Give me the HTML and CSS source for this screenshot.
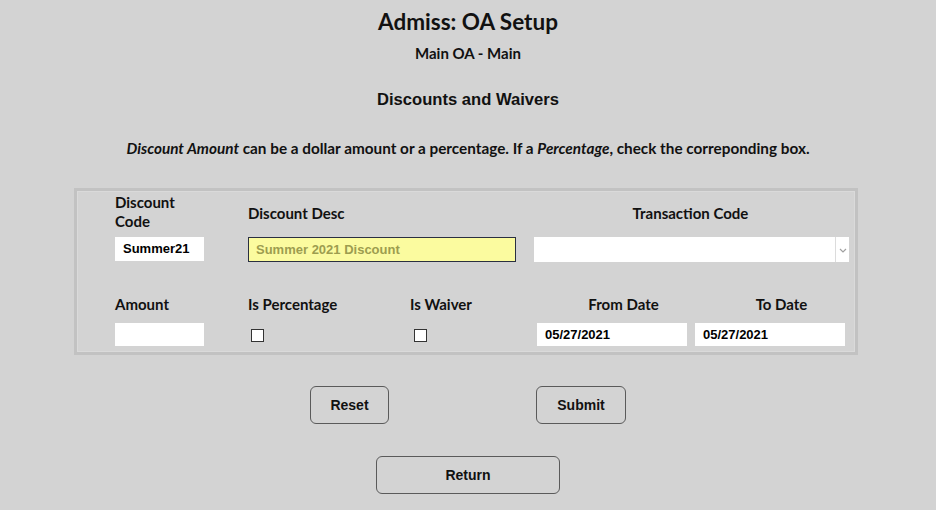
FILE: index.html
```html
<!DOCTYPE html>
<html>
<head>
<meta charset="utf-8">
<link rel="stylesheet" href="styles.css">
</head>
<body>
<h1 class="title">Admiss: OA Setup</h1>
<div class="subtitle">Main OA - Main</div>
<h2 class="section">Discounts and Waivers</h2>
<p class="note"><i>Discount Amount</i> can be a dollar amount or a percentage. If a <i>Percentage</i>, check the correponding box.</p>

<div class="panel">
  <div class="grid">
    <div class="lbl l-code">Discount<br>Code</div>
    <div class="lbl l-desc">Discount Desc</div>
    <div class="lbl l-trans">Transaction Code</div>

    <div class="field f-code">Summer21</div>
    <div class="field f-desc">Summer 2021 Discount</div>
    <div class="field f-trans"><span class="sel-body"></span><span class="sel-arrow"><svg width="8" height="5" viewBox="0 0 8 5"><path d="M1 1 L4 4 L7 1" fill="none" stroke="#a0a0a0" stroke-width="1.2"/></svg></span></div>

    <div class="lbl r2 l-amt">Amount</div>
    <div class="lbl r2 l-pct">Is Percentage</div>
    <div class="lbl r2 l-wav">Is Waiver</div>
    <div class="lbl r2 l-from">From Date</div>
    <div class="lbl r2 l-to">To Date</div>

    <div class="field f-amt"></div>
    <div class="chk c-pct"></div>
    <div class="chk c-wav"></div>
    <div class="field f-date f-from">05/27/2021</div>
    <div class="field f-date f-to">05/27/2021</div>
  </div>
</div>

<div class="btn-row">
  <button class="btn b-reset">Reset</button>
  <button class="btn b-submit">Submit</button>
</div>
<div class="btn-row second">
  <button class="btn b-return">Return</button>
</div>
</body>
</html>
```

FILE: styles.css
```css
html, body {
  margin: 0;
  padding: 0;
  background: #d3d3d3;
  color: #111;
}
body {
  width: 936px;
  height: 510px;
  overflow: hidden;
  font-family: Lato, "Open Sans", sans-serif;
}
.title {
  margin: 0;
  padding-top: 9px;
  font-size: 22.5px;
  line-height: 26px;
  font-weight: 700;
  text-align: center;
}
.subtitle {
  margin-top: 9px;
  font-size: 15px;
  line-height: 18px;
  font-weight: 700;
  text-align: center;
}
.section {
  margin: 28px 0 0;
  font-family: "Liberation Sans", Arial, sans-serif;
  font-size: 16.6px;
  line-height: 20px;
  font-weight: 700;
  text-align: center;
}
.note {
  margin: 29px 0 0;
  font-size: 15.3px;
  line-height: 18px;
  font-weight: 700;
  text-align: center;
}
.panel {
  margin: 31px 0 0 74px;
  width: 784px;
  box-sizing: border-box;
  border: 3px solid #c2c2c2;
  box-shadow: inset 0 0 0 1px #dadada;
  padding: 3px 0 6px 38px;
}
.grid {
  display: grid;
  grid-template-columns: 133px 162px 124px 157px 159px;
  grid-template-rows: 38px 30px 52px 32px;
}
.lbl {
  font-size: 15px;
  line-height: 19px;
  font-weight: 700;
  align-self: center;
  white-space: nowrap;
}
.l-code { grid-column: 1; grid-row: 1; margin-top: -2px; }
.l-desc { grid-column: 2 / 4; grid-row: 1; }
.l-trans { grid-column: 4 / 6; grid-row: 1; text-align: center; padding-right: 3px; }
.r2 { grid-row: 3; align-self: end; line-height: 20px; }
.l-amt { grid-column: 1; }
.l-pct { grid-column: 2; }
.l-wav { grid-column: 3; }
.l-from { grid-column: 4; text-align: center; padding-left: 22px; }
.l-to { grid-column: 5; text-align: center; padding-left: 22px; }

.field {
  box-sizing: border-box;
  background: #fff;
  font-family: "Liberation Sans", Arial, sans-serif;
  font-size: 13px;
  font-weight: 700;
  color: #000;
  align-self: end;
  white-space: nowrap;
}
.f-code {
  grid-column: 1; grid-row: 2;
  width: 89px; height: 24px; line-height: 24px;
  padding-left: 8px;
  margin-bottom: 1px;
}
.f-desc {
  grid-column: 2 / 4; grid-row: 2;
  width: 268px; height: 25px; line-height: 23px;
  padding-left: 7px;
  background: #fbfb9f;
  border: 1px solid #2a2f40;
  color: #9d9d4f;
}
.f-trans {
  grid-column: 4 / 6; grid-row: 2;
  width: 315px; height: 25px;
  display: flex;
}
.sel-body { flex: 1; }
.sel-arrow {
  width: 13px;
  border-left: 1px solid #dcdcdc;
  display: flex;
  align-items: center;
  justify-content: center;
  padding-top: 1px;
}
.f-amt {
  grid-column: 1; grid-row: 4;
  width: 89px; height: 23px;
}
.f-date {
  grid-row: 4;
  width: 150px; height: 23px; line-height: 23px;
  padding-left: 8px;
}
.f-from { grid-column: 4; margin-left: 3px; }
.f-to { grid-column: 5; margin-left: 4px; }

.chk {
  grid-row: 4;
  width: 13px; height: 13px;
  box-sizing: border-box;
  border: 1px solid #333;
  background: #fff;
  align-self: end;
  margin-bottom: 4px;
}
.c-pct { grid-column: 2; margin-left: 3px; }
.c-wav { grid-column: 3; margin-left: 4px; }

.btn-row {
  display: flex;
  justify-content: center;
  gap: 147px;
  margin-top: 31px;
}
.btn-row.second { margin-top: 32px; }
.btn {
  height: 38px;
  box-sizing: border-box;
  background: transparent;
  border: 1px solid #5a5a5a;
  border-radius: 6px;
  font-family: "Liberation Sans", Arial, sans-serif;
  font-size: 14px;
  font-weight: 700;
  color: #111;
  padding: 0;
}
.b-reset { width: 79px; }
.b-submit { width: 90px; }
.b-return { width: 184px; }
```
